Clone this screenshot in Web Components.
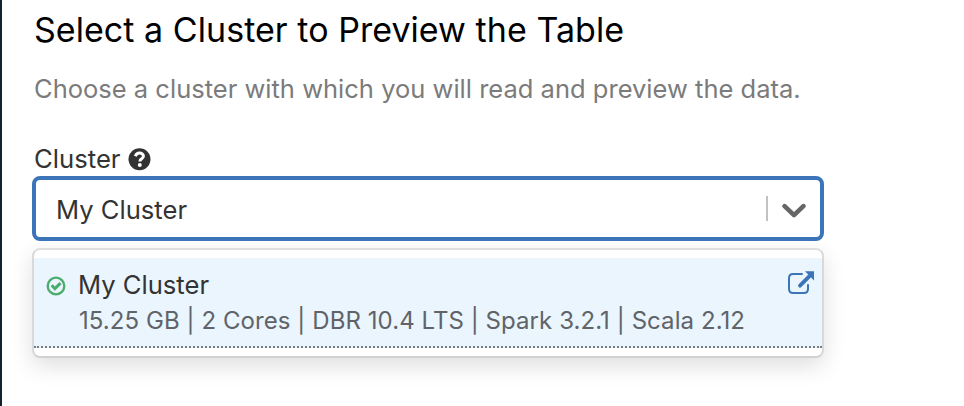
<!DOCTYPE html>
<html lang="en"><head><meta charset="utf-8"><title>Select a Cluster</title>
<style>
html,body{margin:0;height:100%;overflow:hidden;background:#fff}
body{font-family:Inter,"Liberation Sans",sans-serif}
</style></head><body>
<preview-panel>
  <span slot="title">Select a Cluster to Preview the Table</span>
  <span slot="description">Choose a cluster with which you will read and preview the data.</span>
  <field-label>Cluster</field-label>
  <cluster-select>My Cluster</cluster-select>
  <cluster-menu>
    <cluster-option>My Cluster<span slot="details">15.25 GB | 2 Cores | DBR 10.4 LTS | Spark 3.2.1 | Scala 2.12</span></cluster-option>
  </cluster-menu>
</preview-panel>
<script>
const define = (name, html) => customElements.define(name, class extends HTMLElement {
  constructor() { super(); this.attachShadow({mode: 'open'}).innerHTML = html; }
});
define('preview-panel', `<style>
:host{display:block;box-sizing:border-box;height:406px;border-left:2px solid #12222f;padding:10px 0 0 30px}
h1,p{margin:0 0 0 2px;font-weight:400;white-space:nowrap}
h1{font-size:34px;line-height:40px;letter-spacing:.045px;color:#000}
p{font-size:25.5px;line-height:32px;letter-spacing:.01px;color:#7b7b7b;margin-top:23px;margin-bottom:38px}
</style><h1><slot name="title"></slot></h1><p><slot name="description"></slot></p><slot></slot>`);
define('field-label', `<style>
:host{display:flex;align-items:center;gap:7px;height:32px;padding-left:2px;font-size:25.7px;line-height:32px;color:#333;margin-bottom:1px}
svg{display:block}
</style><span><slot></slot></span><svg width="23" height="23" viewBox="0 0 23 23"><circle cx="11.5" cy="11.2" r="11" fill="#333"/><path d="M7.4 8.2C8.2 6 9.6 5 11.5 5c2.2 0 3.9 1.3 3.9 3.2 0 2.7-3.5 2.5-3.5 5.2" fill="none" stroke="#fff" stroke-width="3"/><circle cx="11.8" cy="17" r="2" fill="#fff"/></svg>`);
define('cluster-select', `<style>
:host{display:flex;box-sizing:border-box;width:792px;height:65px;border:4px solid #3b74b9;border-radius:8px;background:#fff;padding:0 14px 0 20px;align-items:center;font-size:25.6px;line-height:32px;color:#333}
:host{position:relative;z-index:1}
span{flex:1;padding-top:3px}
i{width:2px;height:25px;background:#c2c2c2;margin-right:14px}
svg{display:block;margin-top:4px}
</style><span><slot></slot></span><i></i><svg width="24" height="16" viewBox="0 0 24 16"><path d="M2.6 3.2 12 12.2 21.4 3.2" fill="none" stroke="#666" stroke-width="4.6" stroke-linecap="round" stroke-linejoin="round"/></svg>`);
define('cluster-menu', `<style>
:host{display:block;box-sizing:border-box;width:792px;height:110px;margin-top:7px;border:2px solid;border-color:#e0e0e0 #d9d9d9 #d1d1d1;border-radius:8px;background:#fff;padding:8px 0;box-shadow:0 8px 22px rgba(0,0,0,.13)}
</style><slot></slot>`);
define('cluster-option', `<style>
:host{display:grid;grid-template-columns:44px 1fr 26px;box-sizing:border-box;height:90px;padding:11px 8px 0 0;background:#eaf5fe;border-bottom:2px dotted #777c81;color:#333}
.name{font-size:25.6px;line-height:32px}
.details{font-size:24px;line-height:32px;letter-spacing:.07px;color:#606368;margin:4px 0 0 1px;white-space:nowrap}
.check{margin:7px 0 0 12px}
.open{margin-top:2px}
svg{display:block}
</style><svg class="check" width="20" height="20" viewBox="0 0 20 20" fill="none" stroke="#4bac6c"><circle cx="10" cy="10" r="8.3" stroke-width="2.3"/><path d="m5.7 9.3 3.2 3.3 5.6-5.5" stroke-width="3"/></svg>
<div><div class="name"><slot></slot></div><div class="details"><slot name="details"></slot></div></div>
<svg class="open" width="27" height="24" viewBox="0 0 27 24"><path d="M14.7 3H5.2Q1 3 1 7.2v10.6Q1 22 5.2 22h10.6q4.2 0 4.2-4.2v-4.6" fill="none" stroke="#3b74b9" stroke-width="2"/><path d="M12 14.7 21.5 5.2" stroke="#3b74b9" stroke-width="3.8" stroke-linecap="round"/><path d="M17 .3h9v9.2z" fill="#3b74b9"/></svg>`);
</script></body></html>
